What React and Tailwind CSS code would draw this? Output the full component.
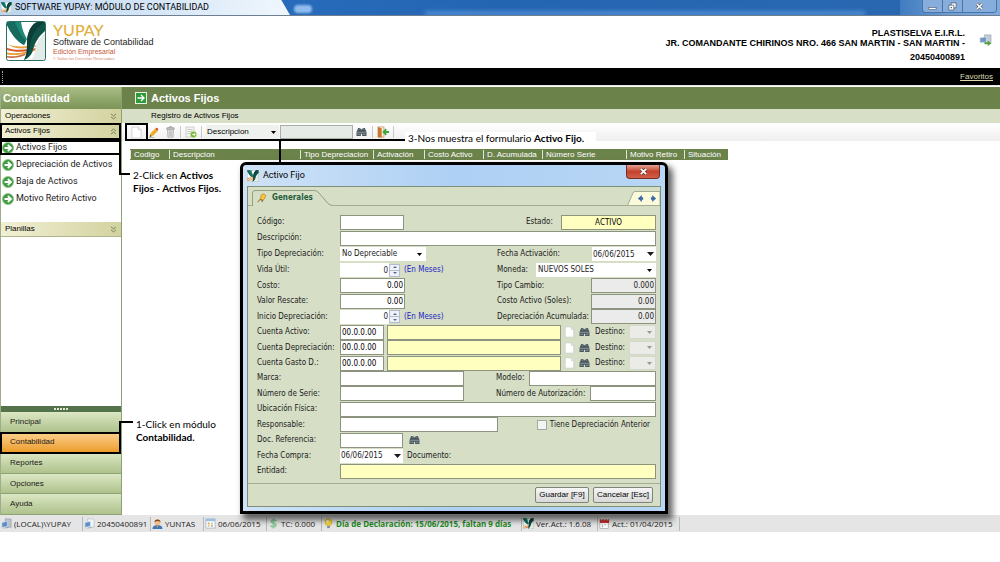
import React from "react";

const UI = "font-['Liberation_Sans',sans-serif]";
const TAHOMA = "font-['DejaVu_Sans_Condensed','DejaVu_Sans',sans-serif]";
const SEGOE = "font-['Open_Sans',sans-serif]";
const CAPTION = "font-['Roboto',sans-serif]";

/* ---------- icons ---------- */

function YupayMark({ className }) {
  return (
    <svg viewBox="0 0 40 40" className={className} aria-hidden="true">
      <rect x="0.5" y="0.5" width="39" height="39" rx="2" fill="#fff" />
      <path d="M1 1h14c1 7 3 12 6 17l-3 6C10 20 5 12 1 4z" fill="#1d8a78" />
      <path d="M1 1h8c3 8 6 13 11 19l-2 4C10 20 5 12 1 4z" fill="#176b5e" />
      <path d="M1 23c8 3 15 2.500 22 2 6-.6 11-.8 16 0-6 .2-10 .8-16 1.800-8 1.200-15 .8-22-3.800z" fill="#e9a13a" />
      <path d="M1 27c8 2.500 15 2 22 1 6-.8 10-.8 15-.3-6 .4-9 1-14 2-8 1.700-16 1.500-23-.7z" fill="#d8572a" />
      <path d="M1 31.500c8 1.500 14 .3 20-1.300 5-1.200 8-1.600 13-1.400-5 1-8 1.800-12 2.900-7 2.300-14 3-21 1.800z" fill="#e9a13a" />
      <path d="M1 35c7 1 13-.5 19-2.800l-1 2c-6 2.300-12 3.200-18 2.400z" fill="#c9683c" />
      <path d="M39 1v9C33 15 29 21 27 29c-1 4-4 8-9 10 3-5 3-10 3-17C21 12 25 3 33 1z" fill="#125347" />
      <path d="M39 1C30 6 25 15 24 25c-.5 6-2 11-6 14 3-5 3-10 3-17C21 12 25 3 31 1z" fill="#0d3f38" />
      <path d="M39 12c-6 5-9 11-10 18-.6 4-2 7-4 9h14z" fill="#e3ebe8" />
      <rect x="0.5" y="0.5" width="39" height="39" rx="2" fill="none" stroke="#2b6e62" />
    </svg>
  );
}

function PageIcon({ className }) {
  return (
    <svg viewBox="0 0 12 14" className={className} aria-hidden="true">
      <path d="M1 1h7l3 3v9H1z" fill="#fff" stroke="#c4c8c4" strokeWidth="0.8" />
      <path d="M8 1v3h3" fill="#eef0ee" stroke="#c4c8c4" strokeWidth="0.8" />
    </svg>
  );
}

function PencilIcon({ className }) {
  return (
    <svg viewBox="0 0 12 12" className={className} aria-hidden="true">
      <path d="M2 10.5L3 7l5-5 2.400 2.400-5 5z" fill="#f2b01e" stroke="#c98a1c" strokeWidth="0.4" />
      <path d="M8 2l1-1c1-.6 2.600 1 2 2l-.8 1z" fill="#d8452a" />
      <path d="M2 10.500l.5-1.800 1.300 1.300z" fill="#3a2a12" />
      <path d="M1 11.500h6" stroke="#8a8a8a" strokeWidth="0.6" />
    </svg>
  );
}

function TrashIcon({ className }) {
  return (
    <svg viewBox="0 0 12 14" className={className} aria-hidden="true">
      <path d="M4.500 2V1h3v1" fill="none" stroke="#8b8f8b" />
      <rect x="1.500" y="2" width="9" height="2" rx="0.5" fill="#c3c6c3" stroke="#8b8f8b" strokeWidth="0.7" />
      <path d="M2.500 4.500h7L9 13H3z" fill="#e4e6e4" stroke="#9b9f9b" strokeWidth="0.8" />
      <path d="M4.700 6v5.500M6 6v5.500M7.300 6v5.500" stroke="#9b9f9b" strokeWidth="0.6" />
    </svg>
  );
}

function SheetGoIcon({ className }) {
  return (
    <svg viewBox="0 0 12 12" className={className} aria-hidden="true">
      <rect x="1" y="1" width="8" height="10" fill="#f4f6f2" stroke="#b9c0b4" strokeWidth="0.7" />
      <path d="M2.500 3.500h5M2.500 5.500h5M2.500 7.500h3" stroke="#b9c0b4" strokeWidth="0.8" />
      <circle cx="8.500" cy="8.500" r="3" fill="#7cb83c" />
      <path d="M7 8.500h3M8.700 7l1.500 1.500-1.500 1.500" fill="none" stroke="#fff" strokeWidth="0.8" />
    </svg>
  );
}

function BinocularsIcon({ className }) {
  return (
    <svg viewBox="0 0 12 11" className={className} aria-hidden="true">
      <path d="M2.300 1h2.500v1.500h2.400V1h2.500l1.800 4.500V10H6.700V7.500H5.300V10H.5V5.500z" fill="#4a565e" />
      <path d="M1 5.800h10" stroke="#a9b8c0" strokeWidth="0.700" />
      <path d="M1.500 8h3M7.500 8h3" stroke="#8596a0" strokeWidth="1.200" />
      <path d="M3 2.300h1.200M7.800 2.300H9" stroke="#a9b8c0" strokeWidth="0.800" />
    </svg>
  );
}

function DoorIcon({ className }) {
  return (
    <svg viewBox="0 0 14 13" className={className} aria-hidden="true">
      <rect x="1" y="1" width="6.500" height="11" fill="#f6efe0" stroke="#b98a54" strokeWidth="0.7" />
      <path d="M1 1l4 1.500v10.200L1 12z" fill="#c9772c" />
      <path d="M13 6.500H8M10 3.500L7 6.500l3 3" fill="none" stroke="#3fa53c" strokeWidth="1.900" />
    </svg>
  );
}

function GoCircle({ className }) {
  return (
    <svg viewBox="0 0 12 12" className={className} aria-hidden="true">
      <circle cx="6" cy="6" r="5.500" fill="#3f9c40" stroke="#8cc088" strokeWidth="0.8" />
      <path d="M2.500 6h5.800M5.800 3L9 6 5.800 9" fill="none" stroke="#fff" strokeWidth="1.800" />
    </svg>
  );
}

function GoSquare({ className }) {
  return (
    <svg viewBox="0 0 12 12" className={className} aria-hidden="true">
      <rect x="0.500" y="0.500" width="11" height="11" fill="#2f9a3c" stroke="#e6f2dc" />
      <path d="M2.500 6h6M6 3l3 3-3 3" fill="none" stroke="#fff" strokeWidth="1.400" />
    </svg>
  );
}

function Chevrons({ up }) {
  return (
    <svg viewBox="0 0 8 8" className={up ? "size-[7px] rotate-180" : "size-[7px]"} aria-hidden="true">
      <path d="M1.200 1l2.800 2.400L6.800 1M1.200 4.400L4 6.800l2.800-2.400" fill="none" stroke="#5c6a3c" strokeWidth="0.900" />
    </svg>
  );
}

function ComputerIcon({ className }) {
  return (
    <svg viewBox="0 0 12 12" className={className} aria-hidden="true">
      <rect x="4.500" y="1" width="6.500" height="9" fill="#b9c4cc" stroke="#8796a2" strokeWidth="0.6" />
      <path d="M1 5l6-1.500V9L1 10.500z" fill="#5c8cc4" stroke="#dce6ee" strokeWidth="0.7" />
      <path d="M1 11.500l7-1.500v1z" fill="#7f93a6" />
    </svg>
  );
}

function ConnectIcon({ className }) {
  return (
    <svg viewBox="0 0 14 13" className={className} aria-hidden="true">
      <rect x="6" y="1" width="7" height="9" fill="#c3ccd2" stroke="#93a1ab" strokeWidth="0.6" />
      <path d="M1 4l7-1v6L1 9.500z" fill="#6f97c2" stroke="#dbe4ea" strokeWidth="0.8" />
      <path d="M6 9h3.500V7l3.700 3.200-3.700 2.800v-2H6z" fill="#4fa338" />
    </svg>
  );
}

function ServerIcon({ className }) {
  return (
    <svg viewBox="0 0 12 12" className={className} aria-hidden="true">
      <path d="M4 1h6l1 1v8H4z" fill="#f2f5f8" stroke="#9fb0c0" strokeWidth="0.6" />
      <path d="M1 5l6-1.300V9L1 10.300z" fill="#5c90cc" stroke="#dce6ee" strokeWidth="0.7" />
      <path d="M1 11.500l7-1.500v1z" fill="#7f93a6" />
    </svg>
  );
}

function UserIcon({ className }) {
  return (
    <svg viewBox="0 0 12 12" className={className} aria-hidden="true">
      <path d="M.5 12c0-3 2-4.500 5.500-4.500s5.500 1.500 5.500 4.500z" fill="#3f78b8" />
      <circle cx="6" cy="4.500" r="3.200" fill="#efbd8c" />
      <path d="M2.800 4.500C2.300.6 9.700.6 9.200 4.500 7.500 3 5 3 2.800 4.500z" fill="#7a4418" />
      <path d="M4.500 8L6 10.500 7.500 8z" fill="#e8933c" />
    </svg>
  );
}

function DateIcon({ className }) {
  return (
    <svg viewBox="0 0 12 12" className={className} aria-hidden="true">
      <rect x="1" y="1" width="10" height="10" fill="#fff" stroke="#9ab0c4" strokeWidth="0.8" />
      <path d="M1 1h10v2.500H1z" fill="#9cc0e2" />
      <path d="M3 5h2v2H3zM6.500 7.500h2v2h-2z" fill="#e89a6c" />
      <path d="M6.500 5h2v2h-2zM3 7.500h2v2H3z" fill="#b7d3a4" />
    </svg>
  );
}

function BulbIcon({ className }) {
  return (
    <svg viewBox="0 0 12 12" className={className} aria-hidden="true">
      <circle cx="6" cy="4.500" r="3.800" fill="#f7d83c" stroke="#c9a41c" strokeWidth="0.6" />
      <circle cx="5" cy="3.500" r="1.300" fill="#fffbd0" />
      <path d="M4.500 8.500h3v2.500h-3z" fill="#8a8f94" />
    </svg>
  );
}

function DollarIcon({ className }) {
  return (
    <svg viewBox="0 0 10 12" className={className} aria-hidden="true">
      <path d="M8 3.500C7 2 3 1.800 2.500 3.800 2.200 6 8 5.500 7.700 8 7.300 10.200 3 10.200 2 8.400M5 .5v11" fill="none" stroke="#8cc795" strokeWidth="1.800" />
    </svg>
  );
}

function CalendarIcon({ className }) {
  return (
    <svg viewBox="0 0 12 12" className={className} aria-hidden="true">
      <rect x="1" y="2" width="9" height="9.500" fill="#fff" stroke="#9a9a9a" strokeWidth="0.700" />
      <path d="M1 1.500h10v4H1z" fill="#c8322c" />
      <path d="M3 .5v2M6 .5v2M9 .5v2" stroke="#fff" strokeWidth="0.800" />
      <path d="M3 7.500h1.500M6 7.500h1.500M3 9.500h1.500" stroke="#8a8a8a" />
    </svg>
  );
}

function HandIcon({ className }) {
  return (
    <svg viewBox="0 0 12 12" className={className} aria-hidden="true">
      <path d="M4 8l1-5c.5-2 4-2.500 5-.5.6 1.500-.5 4-2.500 6z" fill="#f6c63c" stroke="#b47c14" strokeWidth="0.800" />
      <path d="M1 11c1-2 2-3 3-3l3 1-1 2" fill="none" stroke="#8a6428" strokeWidth="1.200" />
    </svg>
  );
}

function Caret({ className = "w-[5px] h-[3px]" }) {
  return (
    <svg viewBox="0 0 6 4" preserveAspectRatio="none" className={className} aria-hidden="true">
      <path d="M0 0h6L3 4z" fill="currentColor" />
    </svg>
  );
}

/* ---------- window chrome ---------- */

function TitleBar() {
  return (
    <div className="relative flex h-4 items-center overflow-hidden border-b border-[#6f7f92] bg-linear-to-r from-[#2d74c6] via-[#2465b2] to-[#2a68b0]">
      <div className="absolute inset-y-0 left-0 w-[290px] bg-linear-to-r from-[#bcd6f0] via-[#d3e5f6] to-[#f0f7fd] [clip-path:polygon(0_0,97%_0,100%_100%,0_100%)]" />
      <div className="absolute top-[5px] left-[294px] h-2 w-[18px] rounded-sm bg-[#8fbcee] blur-[1px]" />
      <div className="absolute -bottom-px left-[425px] h-[5px] w-[440px] bg-[#5f9be0] opacity-70 blur-[2px]" />
      <div className="absolute top-0 right-0 h-4 w-[100px] bg-linear-to-r from-[#3f7cc0] via-[#6f9fd3] to-[#7fabdb]" />
      <YupayMark className="relative ml-px size-[11px]" />
      <h1 className={"relative ml-[3px] text-[9px] leading-none text-black " + CAPTION}>SOFTWARE YUPAY: MÓDULO DE CONTABILIDAD</h1>
      <div className="relative mr-[3px] ml-auto flex h-[13px] self-start overflow-hidden rounded-b-sm border border-t-0 border-[#4b74a6] text-white">
        <button aria-label="Minimizar" className="flex w-5 items-center justify-center border-r border-[#4b74a6] bg-[#86addb]">
          <svg viewBox="0 0 10 10" className="size-[9px]"><rect x="1" y="6" width="8" height="2.500" fill="#fff" stroke="#47576a" strokeWidth="0.700" /></svg>
        </button>
        <button aria-label="Restaurar" className="flex w-5 items-center justify-center border-r border-[#4b74a6] bg-[#86addb]">
          <svg viewBox="0 0 10 10" className="size-[9px]"><path d="M3.500 1h5.500v5.500H3.500z" fill="#fff" stroke="#47576a" strokeWidth="0.800" /><path d="M1 3.500h5.500V9H1z" fill="#fff" stroke="#47576a" strokeWidth="0.800" /><path d="M3 5.500h1.500V7H3z" fill="#47576a" /></svg>
        </button>
        <button aria-label="Cerrar" className="flex w-[33px] items-center justify-center bg-[#86addb]">
          <svg viewBox="0 0 10 10" className="size-[9px]"><path d="M2 2l6 6M8 2L2 8" stroke="#47576a" strokeWidth="3" /><path d="M2 2l6 6M8 2L2 8" stroke="#fff" strokeWidth="1.800" /></svg>
        </button>
      </div>
    </div>
  );
}

function Header() {
  return (
    <header className="flex h-[52px] items-start bg-white">
      <YupayMark className="mt-[5px] ml-[6px] size-10" />
      <div className={"mt-[7px] ml-[7px] whitespace-nowrap " + UI}>
        <div className="font-['Lato',sans-serif] text-[16px] leading-[14px] font-medium text-[#e0b040]">YUPAY</div>
        <div className="text-[9px] leading-[10px] text-[#1c1c1c]">Software de Contabilidad</div>
        <div className="text-[7px] leading-[9px] text-[#c4583c]">Edición Empresarial</div>
        <div className="text-[4px] leading-[5px] text-[#d88a70]">© Todos los Derechos Reservados</div>
      </div>
      <div className={"mt-[13px] ml-auto text-right text-[9px] font-bold text-black " + UI}>
        <div className="leading-[9px]">PLASTISELVA E.I.R.L.</div>
        <div className="leading-[10px]">JR. COMANDANTE CHIRINOS NRO. 466 SAN MARTIN - SAN MARTIN -</div>
        <div className="mt-1 leading-[10px]">20450400891</div>
      </div>
      <ConnectIcon className="mt-[18px] mr-2 ml-[14px] h-3 w-[13px]" />
    </header>
  );
}

/* ---------- sidebar ---------- */

function GroupHeader({ children, up }) {
  return (
    <button className="flex h-[15px] w-full items-center justify-between border-b border-[#b4b48c] bg-linear-to-r from-[#f2f0d4] to-[#d2d2a0] pr-1 pl-1 text-[8px] leading-none text-black">
      {children}
      <Chevrons up={up} />
    </button>
  );
}

const LINKS = ["Activos Fijos", "Depreciación de Activos", "Baja de Activos", "Motivo Retiro Activo"];
const MODULES = ["Principal", "Contabilidad", "Reportes", "Opciones", "Ayuda"];

function Sidebar() {
  return (
    <aside className={"flex w-[122px] shrink-0 flex-col border-r border-[#8ba273] border-l border-l-[#9fae8a] bg-white " + UI}>
      <h2 className="flex h-[22px] items-center bg-linear-to-b from-[#a9bd85] to-[#7b9457] pl-[2px] text-[11px] font-bold text-white">Contabilidad</h2>
      <GroupHeader>Operaciones</GroupHeader>
      <GroupHeader up>Activos Fijos</GroupHeader>
      <nav className="flex h-[83px] flex-col">
        {LINKS.map((t) => (
          <a key={t} href="#" className={"flex h-[17px] items-center gap-[2px] pl-px text-[9px] leading-none text-[#222] " + CAPTION}>
            <GoCircle className="size-3" />
            {t}
          </a>
        ))}
      </nav>
      <GroupHeader>Planillas</GroupHeader>
      <div className="h-[169px]" />
      <div className="flex h-[6px] items-center justify-center gap-px bg-[#55734b]">
        {[0, 1, 2, 3, 4].map((i) => <span key={i} className="size-[2px] bg-[#dfe8d4]" />)}
      </div>
      <nav className="grid h-[103px] auto-rows-fr">
        {MODULES.map((t) => (
          <button
            key={t}
            className={
              "flex items-center border-b pl-[9px] text-left text-[8px] leading-none text-[#1a1a1a] " +
              (t === "Contabilidad"
                ? "border-[#c98a20] bg-linear-to-b from-[#fbd08a] to-[#ec9c22]"
                : "border-[#8aa274] bg-linear-to-b from-[#dce7c4] to-[#afc28c]")
            }
          >
            {t}
          </button>
        ))}
      </nav>
    </aside>
  );
}

/* ---------- main area ---------- */

const Divider = () => <span className="h-3 w-px bg-[#c8ccc8]" />;

function Toolbar() {
  return (
    <div className="flex h-[18px] items-center bg-linear-to-b from-white to-[#efefef] pl-[9px]">
      <button aria-label="Nuevo"><PageIcon className="h-[13px] w-[11px]" /></button>
      <button aria-label="Editar" className="ml-[6px]"><PencilIcon className="size-[11px]" /></button>
      <button aria-label="Eliminar" className="ml-[6px]"><TrashIcon className="h-3 w-[11px]" /></button>
      <span className="ml-1 flex"><Divider /></span>
      <button aria-label="Exportar" className="ml-1"><SheetGoIcon className="size-3" /></button>
      <span className="mr-1 ml-1 flex"><Divider /></span>
      <span className="relative flex w-[73px] items-center">
        <select aria-label="Buscar por" className="h-[14px] w-full appearance-none bg-[#eef1ee] pl-px text-[8px] leading-[14px]">
          <option>Descripcion</option>
        </select>
        <Caret className="pointer-events-none absolute right-[3px] h-[3px] w-[5px] text-black" />
      </span>
      <input aria-label="Texto a buscar" className="ml-px h-[14px] w-[73px] border border-[#a8b0a8] bg-[#e6eae6] px-1 text-[8px]" />
      <button aria-label="Buscar" className="ml-[3px]"><BinocularsIcon className="h-[10px] w-[11px]" /></button>
      <span className="mr-1 ml-[5px] flex"><Divider /></span>
      <button aria-label="Salir"><DoorIcon className="h-3 w-[13px]" /></button>
      <span className="ml-[3px] flex"><Divider /></span>
    </div>
  );
}

const COLUMNS = [
  ["Codigo", "w-[39px]"],
  ["Descripcion", "w-[131px]"],
  ["Tipo Depreciacion", "w-[73px]"],
  ["Activación", "w-[51px]"],
  ["Costo Activo", "w-[59px]"],
  ["D. Acumulada", "w-[59px]"],
  ["Número Serie", "w-[84px]"],
  ["Motivo Retiro", "w-[58px]"],
  ["Situación", "w-[44px]"],
];

function Main() {
  return (
    <main className={"min-w-0 flex-1 bg-white text-black " + UI}>
      <div className="flex h-[22px] items-center gap-1 bg-[#6b824b] pl-[13px]">
        <GoSquare className="size-3" />
        <h2 className="text-[11px] leading-none font-bold text-white">Activos Fijos</h2>
      </div>
      <div className="flex h-[14px] items-center bg-[#d7dfc7] pl-[29px] text-[8px] leading-none">Registro de Activos Fijos</div>
      <Toolbar />
      <table className="mt-2 ml-2 table-fixed border-collapse bg-[#6b824b] text-[8px] leading-none text-white">
        <thead>
          <tr className="h-[11px]">
            {COLUMNS.map(([name, w]) => (
              <th key={name} className={"p-0 text-left font-normal whitespace-nowrap " + w}>
                <span className="flex h-[9px] items-center border-l border-[#dfe6d2] pl-[3px]">{name}</span>
              </th>
            ))}
          </tr>
        </thead>
      </table>
    </main>
  );
}

/* ---------- dialog form ---------- */

const box = "h-[15px] min-w-0 border border-[#8c9480] bg-white px-px text-[8px] leading-none text-black";
const yellow = "h-[15px] min-w-0 border border-[#8c9480] bg-[#ffffc0] px-px text-[8px] leading-none text-black";
const readonlyBox = "h-[15px] w-[65px] min-w-0 border border-[#8c9480] bg-[#ebebeb] px-px text-right text-[8px] leading-none text-[#222]";

function Row({ id, label, children }) {
  return (
    <div className="flex items-center">
      <label htmlFor={id} className="w-[83px] shrink-0 whitespace-nowrap">{label}</label>
      {children}
    </div>
  );
}

function Right({ id, label, width = "w-[159px]", children }) {
  return (
    <div className={"ml-auto flex items-center justify-between whitespace-nowrap " + width}>
      <label htmlFor={id}>{label}</label>
      {children}
    </div>
  );
}

function Combo({ id, value, width, tone = "text-black", bg = "bg-white", label }) {
  return (
    <span className={"relative flex items-center " + width}>
      <select id={id} aria-label={label} className={"h-[14px] w-full appearance-none pl-[2px] text-[8px] leading-[14px] " + bg}>
        <option>{value}</option>
      </select>
      <Caret className={"pointer-events-none absolute right-1 h-[3px] w-[5px] " + tone} />
    </span>
  );
}

function DateBox({ id, width }) {
  return (
    <span className={"flex h-[14px] items-center bg-white " + width}>
      <input id={id} defaultValue="06/06/2015" className="w-[52px] min-w-0 flex-1 px-px text-[8px] leading-none" />
      <button type="button" aria-label="Abrir calendario" className="pr-[2px]"><Caret className="h-1 w-[7px]" /></button>
    </span>
  );
}

function Months({ id }) {
  return (
    <>
      <input id={id} defaultValue="0" className="h-[14px] w-[49px] bg-white px-px text-right text-[8px] leading-none" />
      <span className="flex h-[13px] w-[11px] flex-col border border-[#b4bccc] bg-[#eef1f7] text-[#5a6a94]">
        <button type="button" aria-label="Aumentar" className="flex flex-1 items-center justify-center"><Caret className="h-[2px] w-1 rotate-180" /></button>
        <button type="button" aria-label="Disminuir" className="flex flex-1 items-center justify-center border-t border-[#b4bccc]"><Caret className="h-[2px] w-1" /></button>
      </span>
      <span className="ml-1 text-[#2222c8]">(En Meses)</span>
    </>
  );
}

function AccountRow({ id, label }) {
  return (
    <Row id={id} label={label}>
      <input id={id} defaultValue="00.0.0.00" className={box + " w-[44px]"} />
      <input aria-label={label + " nombre"} readOnly className={yellow + " mx-[3px] flex-1"} />
      <button type="button" aria-label="Nueva cuenta"><PageIcon className="h-3 w-[11px]" /></button>
      <button type="button" aria-label="Buscar cuenta" className="ml-1"><BinocularsIcon className="h-[10px] w-[11px]" /></button>
      <label htmlFor={id + "-d"} className="mr-1 ml-[5px]">Destino:</label>
      <Combo id={id + "-d"} value="" width="w-[27px]" tone="text-[#999]" bg="bg-[#ebece8] border border-[#d3d8ca]" />
    </Row>
  );
}

function Form() {
  return (
    <form className="pt-2 pr-1 pb-1 pl-[9px]">
      <div className="grid auto-rows-[16px]">
        <Row id="cod" label="Código:">
          <input id="cod" className={box + " w-[64px]"} />
          <Right id="est" label="Estado:" width="w-[130px]">
            <input id="est" readOnly value="ACTIVO" className={yellow + " w-[95px] text-center"} />
          </Right>
        </Row>
        <Row id="des" label="Descripción:"><input id="des" className={box + " flex-1"} /></Row>
        <Row id="tipo" label="Tipo Depreciación:">
          <Combo id="tipo" value="No Depreciable" width="w-[86px]" />
          <Right id="fact" label="Fecha Activación:"><DateBox id="fact" width="w-[64px]" /></Right>
        </Row>
        <Row id="vida" label="Vida Útil:">
          <Months id="vida" />
          <Right id="mon" label="Moneda:"><Combo id="mon" value="NUEVOS SOLES" width="w-[120px]" /></Right>
        </Row>
      </div>
      <div className="grid h-[201px] auto-rows-fr">
        <Row id="costo" label="Costo:">
          <input id="costo" defaultValue="0.00" className={box + " w-[65px] text-right"} />
          <Right id="tc" label="Tipo Cambio:"><input id="tc" readOnly value="0.000" className={readonlyBox} /></Right>
        </Row>
        <Row id="valor" label="Valor Rescate:">
          <input id="valor" defaultValue="0.00" className={box + " w-[65px] text-right"} />
          <Right id="ca" label="Costo Activo (Soles):"><input id="ca" readOnly value="0.00" className={readonlyBox} /></Right>
        </Row>
        <Row id="inicio" label="Inicio Depreciación:">
          <Months id="inicio" />
          <Right id="da" label="Depreciación Acumulada:"><input id="da" readOnly value="0.00" className={readonlyBox} /></Right>
        </Row>
        <AccountRow id="cta" label="Cuenta Activo:" />
        <AccountRow id="ctd" label="Cuenta Depreciación:" />
        <AccountRow id="ctg" label="Cuenta Gasto D.:" />
        <Row id="marca" label="Marca:">
          <input id="marca" className={box + " w-[124px]"} />
          <Right id="modelo" label="Modelo:" width="w-[160px]"><input id="modelo" className={box + " w-[127px]"} /></Right>
        </Row>
        <Row id="serie" label="Número de Serie:">
          <input id="serie" className={box + " w-[124px]"} />
          <Right id="aut" label="Número de Autorización:" width="w-[160px]"><input id="aut" className={box + " w-[66px]"} /></Right>
        </Row>
        <Row id="ubi" label="Ubicación Física:"><input id="ubi" className={box + " flex-1"} /></Row>
        <Row id="resp" label="Responsable:">
          <input id="resp" className={box + " w-[158px]"} />
          <label className="mr-[6px] ml-auto flex items-center gap-[3px] whitespace-nowrap">
            <input type="checkbox" className="size-[10px] appearance-none border border-[#a4a9a0] bg-[#f4f4f4]" />
            Tiene Depreciación Anterior
          </label>
        </Row>
        <Row id="doc" label="Doc. Referencia:">
          <input id="doc" className={box + " w-[63px]"} />
          <button type="button" aria-label="Buscar documento" className="ml-[6px]"><BinocularsIcon className="h-[10px] w-[11px]" /></button>
        </Row>
        <Row id="fcom" label="Fecha Compra:">
          <DateBox id="fcom" width="w-[63px]" />
          <span className="ml-1">Documento:</span>
        </Row>
        <Row id="ent" label="Entidad:"><input id="ent" readOnly className={yellow + " flex-1"} /></Row>
      </div>
    </form>
  );
}

function Dialog() {
  return (
    <section
      role="dialog"
      aria-label="Activo Fijo"
      className={"absolute top-[162px] left-[240px] w-[428px] rounded-t-md border-[3px] border-black bg-linear-to-r from-[#cfe2f6] via-[#aed0f4] to-[#b8d6f5] px-1 pb-1 text-[8px] leading-none text-[#1a1a1a] shadow-[4px_5px_6px_1px_#00000099] " + TAHOMA}
    >
      <div className="flex h-[21px] items-center">
        <YupayMark className="size-3" />
        <h3 className={"ml-1 text-[9px] text-black " + CAPTION}>Activo Fijo</h3>
        <button aria-label="Cerrar" className="mr-px ml-auto flex h-[14px] w-[34px] items-center justify-center self-start rounded-b-sm border border-t-0 border-[#7a2c22] bg-linear-to-b from-[#e0a090] via-[#c4402c] to-[#d0604a]">
          <svg viewBox="0 0 10 10" className="size-[9px]"><path d="M2 2l6 6M8 2L2 8" stroke="#5a2a24" strokeWidth="3.200" /><path d="M2 2l6 6M8 2L2 8" stroke="#fff" strokeWidth="2" /></svg>
        </button>
      </div>
      <div className="border border-[#7f8f78] bg-[#d6dec6]">
        <div className="flex h-[19px] items-end">
          <div className="h-px w-1 bg-[#a3ad92]" />
          <div role="tablist" className="relative h-[16px] w-[81px]">
            <svg viewBox="0 0 81 16" className="absolute inset-0 size-full" aria-hidden="true">
              <path d="M.5 16V3Q.5.500 3 .500H62Q65 .500 67 3L76 13.500Q78 15.500 81 15.500" fill="none" stroke="#93a083" />
            </svg>
            <button role="tab" aria-selected="true" className="relative flex h-full items-center gap-[5px] pl-[5px] text-[8px] font-bold text-[#1f5c3c]">
              <HandIcon className="size-[10px]" />
              Generales
            </button>
          </div>
          <div className="h-px flex-1 bg-[#a3ad92]" />
          <div className="relative flex h-[15px] w-[33px] items-center justify-end gap-[6px] pr-[3px]">
            <svg viewBox="0 0 33 15" className="absolute inset-0 size-full" aria-hidden="true">
              <path d="M.5 14.500L6 2Q6.500.500 8 .500H33V14.500z" fill="#fbfbdc" stroke="#a3ad92" />
            </svg>
            <button aria-label="Anterior" className="relative"><svg viewBox="0 0 8 8" className="size-[7px]"><path d="M5.500 0v2.500H7v3H5.500V8L1 4z" fill="#3f69a8" /></svg></button>
            <button aria-label="Siguiente" className="relative"><svg viewBox="0 0 8 8" className="size-[7px]"><path d="M2.500 0v2.500H1v3h1.500V8L7 4z" fill="#3f69a8" /></svg></button>
          </div>
        </div>
        <Form />
        <div className={"flex h-[23px] items-center justify-end gap-1 border-t border-[#a3ad92] pr-[7px] " + UI}>
          <button className="h-4 w-[54px] rounded-[2px] border border-[#7f857a] bg-linear-to-b from-[#f6f6f6] to-[#d9d9d9] text-[8px] leading-none text-black">Guardar [F9]</button>
          <button className="h-4 w-[60px] rounded-[2px] border border-[#7f857a] bg-linear-to-b from-[#f6f6f6] to-[#d9d9d9] text-[8px] leading-none text-black">Cancelar [Esc]</button>
        </div>
      </div>
    </section>
  );
}

/* ---------- tutorial callouts ---------- */

function Callouts() {
  return (
    <>
      <svg viewBox="0 0 420 470" className="pointer-events-none absolute top-0 left-0 h-[470px] w-[420px]" fill="none" stroke="#000" strokeWidth="2" aria-hidden="true">
        <path d="M1 124H120V139H1z" />
        <path d="M1 141H120V154H1z" />
        <path d="M120 139V174H130" />
        <path d="M126 124H147V140H126z" />
        <path d="M126 140H405M280 140V163" />
        <path d="M1 433H120V453H1z" />
        <path d="M120 433V422H133" />
      </svg>
      <div className="pointer-events-none absolute top-0 left-0 font-['Lato',sans-serif] text-[10px] leading-[13px] whitespace-nowrap text-black">
        <p className="absolute top-[132px] left-[405px] bg-white pr-3 pl-[3px]">3-Nos muestra el formulario <b>Activo Fijo.</b></p>
        <p className="absolute top-[169px] left-[133px]">2-Click en <b>Activos</b><br /><b>Fijos - Activos Fijos.</b></p>
        <p className="absolute top-[418px] left-[136px]">1-Click en módulo<br /><b>Contabilidad.</b></p>
      </div>
    </>
  );
}

/* ---------- status bar ---------- */

const STATUS = [
  [ComputerIcon, "(LOCAL)\\YUPAY", "w-[83px]"],
  [ServerIcon, "20450400891", "w-[68px]"],
  [UserIcon, "YUNTAS", "w-[53px]"],
  [DateIcon, "06/06/2015", "w-[63px]"],
  [DollarIcon, "TC: 0.000", "w-[55px]"],
  [BulbIcon, "Día de Declaración: 15/06/2015, faltan 9 días", "w-[200px]"],
  [YupayMark, "Ver.Act.: 1.6.08", "w-[76px]"],
  [CalendarIcon, "Act.: 01/04/2015", "w-[82px]"],
];

function StatusBar() {
  return (
    <footer className={"flex h-[17px] items-center bg-[#e5e5e5] text-[8px] leading-none text-[#222] " + SEGOE}>
      {STATUS.map(([Icon, text, w]) => (
        <div key={text} className={"flex h-[14px] items-center gap-[2px] border-r border-[#b9b9b9] pl-px whitespace-nowrap " + w}>
          <Icon className="size-[11px] shrink-0" />
          <span className={Icon === BulbIcon ? "font-bold text-[#1f8a24]" : ""}>{text}</span>
        </div>
      ))}
    </footer>
  );
}

export default function App() {
  return (
    <div className="relative min-h-screen bg-white">
      <TitleBar />
      <Header />
      <div className={"flex h-[18px] items-center justify-between border-b border-[#e8e8e8] bg-black pr-[7px] pl-[2px] " + UI}>
        <span className="h-3 border-l border-dotted border-[#aaa]" />
        <a href="#" className="text-[8px] leading-none text-[#dcdcae] underline">Favoritos</a>
      </div>
      <div className="mt-px flex">
        <Sidebar />
        <Main />
      </div>
      <StatusBar />
      <Callouts />
      <Dialog />
    </div>
  );
}
